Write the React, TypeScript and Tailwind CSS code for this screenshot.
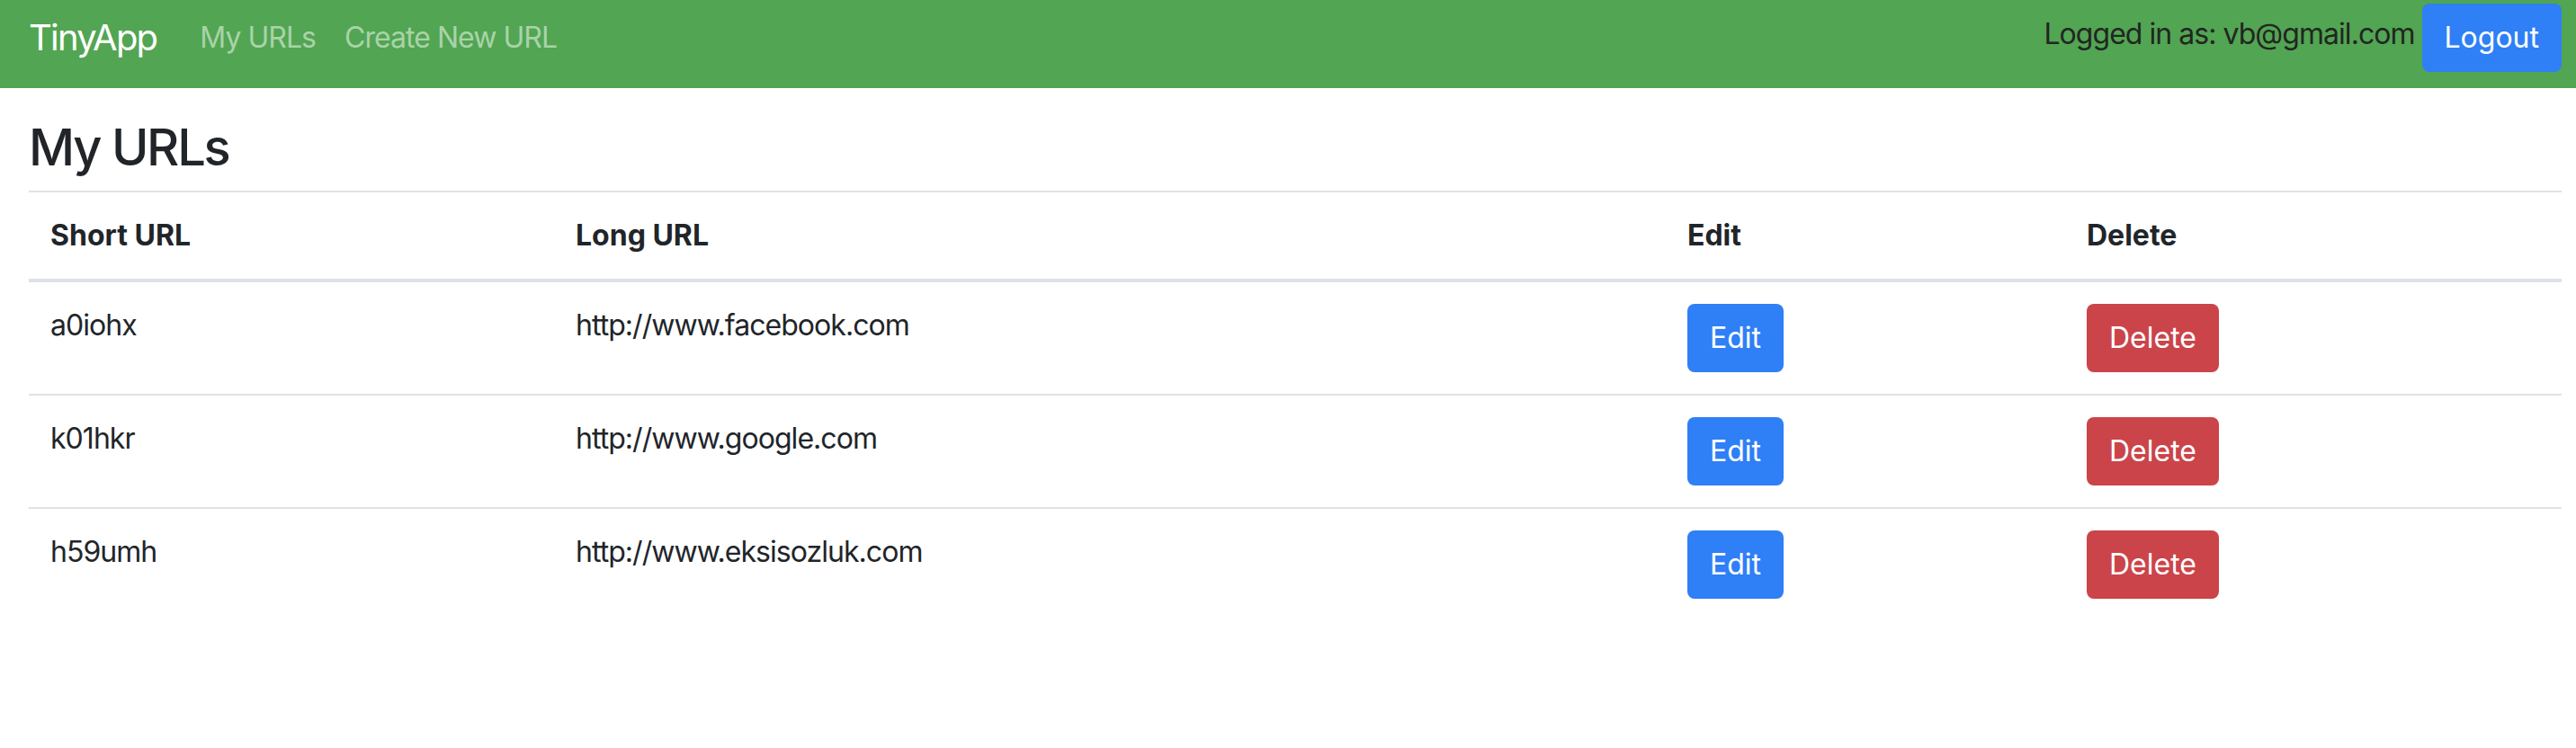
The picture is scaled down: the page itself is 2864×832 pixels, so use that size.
import React from 'react';

type Url = { short: string; long: string };

const urls: Url[] = [
  { short: 'a0iohx', long: 'http://www.facebook.com' },
  { short: 'k01hkr', long: 'http://www.google.com' },
  { short: 'h59umh', long: 'http://www.eksisozluk.com' },
];

const Navbar: React.FC = () => (
  <nav className="flex h-[98px] justify-between bg-[#52a552]">
    <div className="mt-[12px] flex h-[60px] items-center pl-[32px]">
      <a className="mr-[32px] text-[40px] leading-[60px] tracking-[-0.045em] text-white">TinyApp</a>
      <a className="px-4 text-[32px] leading-[48px] tracking-[-0.03em] text-[#a9d3a9]">My URLs</a>
      <a className="px-4 text-[32px] leading-[48px] tracking-[-0.03em] text-[#a9d3a9]">Create New URL</a>
    </div>
    <div className="flex items-start gap-[8px] pr-4 pt-[4px]">
      <span className="mt-[10px] text-[32px] leading-[48px] tracking-[-0.03em] text-[#222622]">Logged in as: vb@gmail.com</span>
      <button className="flex h-[76px] items-center rounded-[8px] bg-[#2f7ff6] px-[25px] text-[32px] leading-[48px] text-white">
        Logout
      </button>
    </div>
  </nav>
);

const App: React.FC = () => {
  return (
    <div className="min-h-screen bg-white font-['Inter',sans-serif] text-[#212529]">
      <Navbar />
      <main className="px-[32px]">
        <h1 className="mb-[14px] mt-[33px] text-[56px] font-medium leading-[67px] tracking-[-0.04em]">My URLs</h1>
        <table className="w-full table-fixed border-collapse text-left text-[32px] leading-[48px] tracking-[-0.03em]">
          <colgroup>
            <col className="w-[584px]" />
            <col className="w-[1236px]" />
            <col className="w-[444px]" />
            <col className="w-[552px]" />
          </colgroup>
          <thead>
            <tr>
              <th className="border-b-4 border-t-2 border-[#dee2e6] p-[24px] font-bold tracking-normal">Short URL</th>
              <th className="border-b-4 border-t-2 border-[#dee2e6] p-[24px] font-bold tracking-normal">Long URL</th>
              <th className="border-b-4 border-t-2 border-[#dee2e6] p-[24px] font-bold tracking-normal">Edit</th>
              <th className="border-b-4 border-t-2 border-[#dee2e6] p-[24px] font-bold tracking-normal">Delete</th>
            </tr>
          </thead>
          <tbody>
            {urls.map((u) => (
              <tr key={u.short}>
                <td className="border-t-2 border-[#dee2e6] p-[24px] align-top">{u.short}</td>
                <td className="border-t-2 border-[#dee2e6] p-[24px] align-top">{u.long}</td>
                <td className="border-t-2 border-[#dee2e6] p-[24px] align-top">
                  <button className="flex h-[76px] items-center rounded-[8px] bg-[#2f7ff6] px-[25px] tracking-normal text-white">Edit</button>
                </td>
                <td className="border-t-2 border-[#dee2e6] p-[24px] align-top">
                  <button className="flex h-[76px] items-center rounded-[8px] bg-[#cb444a] px-[25px] tracking-normal text-white">Delete</button>
                </td>
              </tr>
            ))}
          </tbody>
        </table>
      </main>
    </div>
  );
};

export default App;
